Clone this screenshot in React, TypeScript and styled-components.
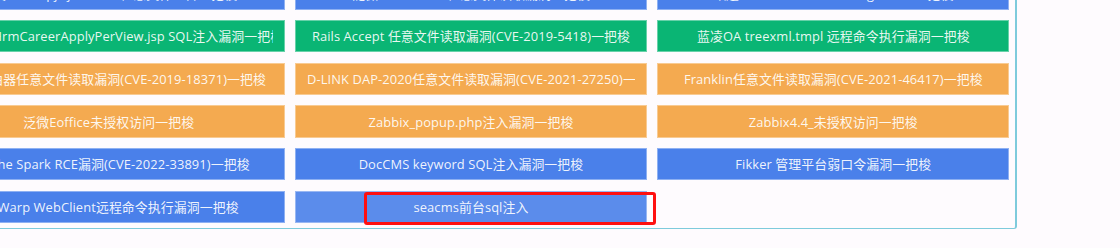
import React from 'react';
import styled, { createGlobalStyle } from 'styled-components';

type Tone = 'blue' | 'green' | 'orange' | 'hover';

const tones: Record<Tone, string> = {
  blue: '#4a80ea',
  green: '#0ab574',
  orange: '#f4aa50',
  hover: '#5b8ceb',
};

const GlobalStyle = createGlobalStyle`
  html, body {
    margin: 0;
    padding: 0;
    background: #fefbfe;
    overflow: hidden;
  }
`;

const Panel = styled.div`
  box-sizing: content-box;
  width: 1076.6px;
  margin: -27.7px 0 0 -73.3px;
  padding: 5px 5.7px 4.8px 5px;
  border-left: 1px solid #7ecbdc;
  border-right: 2px solid #7ecbdc;
  border-bottom: 1px solid #7ecbdc;
  border-radius: 0 0 3px 0;
`;

const Grid = styled.div`
  display: grid;
  grid-template-columns: repeat(3, 352px);
  grid-auto-rows: 32.5px;
  column-gap: 10.3px;
  row-gap: 10.17px;
`;

const Cell = styled.div`
  position: relative;
`;

const ExpButton = styled.button<{ $tone: Tone }>`
  box-sizing: border-box;
  width: 100%;
  height: 100%;
  padding: 0 11px;
  margin: 0;
  border: 1px solid rgba(255, 255, 255, 0.38);
  background: ${(p) => tones[p.$tone]};
  color: rgba(255, 255, 255, 0.92);
  font-family: 'Open Sans', 'Noto Sans CJK SC', sans-serif;
  font-size: 12.9px;
  letter-spacing: 0.1px;
  line-height: 30px;
  white-space: nowrap;
  cursor: pointer;
`;

const Label = styled.span`
  display: block;
  text-align: center;
  overflow: hidden;
`;

const Marker = styled.div`
  position: absolute;
  left: 69px;
  top: 1.6px;
  width: 292px;
  height: 33px;
  box-sizing: border-box;
  border: 3px solid #ff1010;
  border-radius: 3px;
  pointer-events: none;
`;

interface Exp {
  name: string;
  tone: Tone;
  marked?: boolean;
}

const exps: Exp[] = [
  { name: '用友 NC uapjs jsinvoke 任意文件上传一把梭', tone: 'blue' },
  { name: '泛微OA weaver 任意文件读取漏洞一把梭', tone: 'blue' },
  { name: '致远OA htmlofficeservlet getshell一把梭', tone: 'blue' },
  { name: '泛微OA HrmCareerApplyPerView.jsp SQL注入漏洞一把梭', tone: 'green' },
  { name: 'Rails Accept 任意文件读取漏洞(CVE-2019-5418)一把梭', tone: 'green' },
  { name: '蓝凌OA treexml.tmpl 远程命令执行漏洞一把梭', tone: 'green' },
  { name: '小米路由器任意文件读取漏洞(CVE-2019-18371)一把梭', tone: 'orange' },
  { name: 'D-LINK DAP-2020任意文件读取漏洞(CVE-2021-27250)一把梭', tone: 'orange' },
  { name: 'Franklin任意文件读取漏洞(CVE-2021-46417)一把梭', tone: 'orange' },
  { name: '泛微Eoffice未授权访问一把梭', tone: 'orange' },
  { name: 'Zabbix_popup.php注入漏洞一把梭', tone: 'orange' },
  { name: 'Zabbix4.4_未授权访问一把梭', tone: 'orange' },
  { name: 'Apache Spark RCE漏洞(CVE-2022-33891)一把梭', tone: 'blue' },
  { name: 'DocCMS keyword SQL注入漏洞一把梭', tone: 'blue' },
  { name: 'Fikker 管理平台弱口令漏洞一把梭', tone: 'blue' },
  { name: 'ZK Warp WebClient远程命令执行漏洞一把梭', tone: 'blue' },
  { name: 'seacms前台sql注入', tone: 'hover', marked: true },
];

export default function App() {
  return (
    <>
      <GlobalStyle />
      <Panel>
        <Grid>
          {exps.map((e) => (
            <Cell key={e.name}>
              <ExpButton $tone={e.tone}>
                <Label>{e.name}</Label>
              </ExpButton>
              {e.marked && <Marker />}
            </Cell>
          ))}
        </Grid>
      </Panel>
    </>
  );
}
